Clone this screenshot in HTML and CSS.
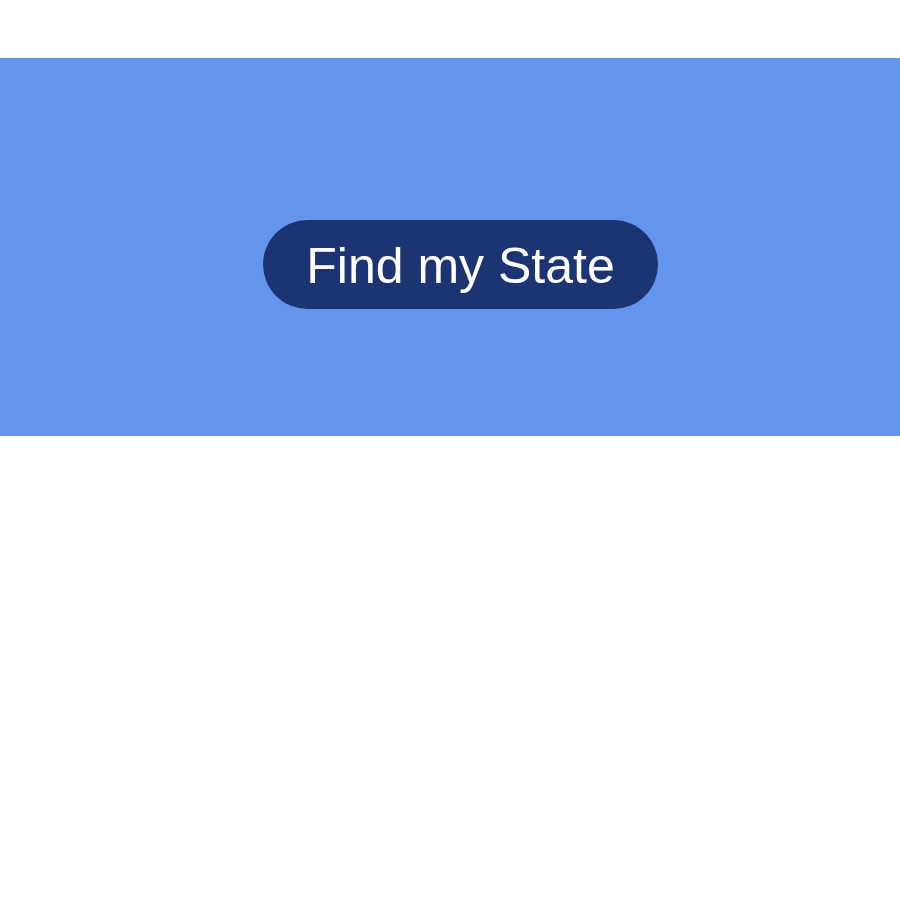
FILE: index.html
```html
<!DOCTYPE html>
<html>
<head>
<meta charset="utf-8">
<link rel="stylesheet" href="styles.css">
</head>
<body>
<section class="hero">
  <button class="find-btn">Find my State</button>
</section>
</body>
</html>
```
FILE: styles.css
```css
html, body {
  margin: 0;
  padding: 0;
  background: #ffffff;
}
body {
  padding-top: 58px;
  font-family: "Liberation Sans", Arial, sans-serif;
}
.hero {
  background: #6495ed;
  height: 378px;
  box-sizing: border-box;
  padding-top: 162px;
  display: flex;
  justify-content: center;
  align-items: flex-start;
}
.find-btn {
  margin-left: 21px;
  width: 395px;
  height: 89px;
  box-sizing: border-box;
  border: none;
  border-radius: 45px;
  background: #1c3472;
  color: #ffffff;
  font-family: "Liberation Sans", Arial, sans-serif;
  font-size: 50px;
  padding: 4px 0 0 0;
  line-height: 85px;
}
```
